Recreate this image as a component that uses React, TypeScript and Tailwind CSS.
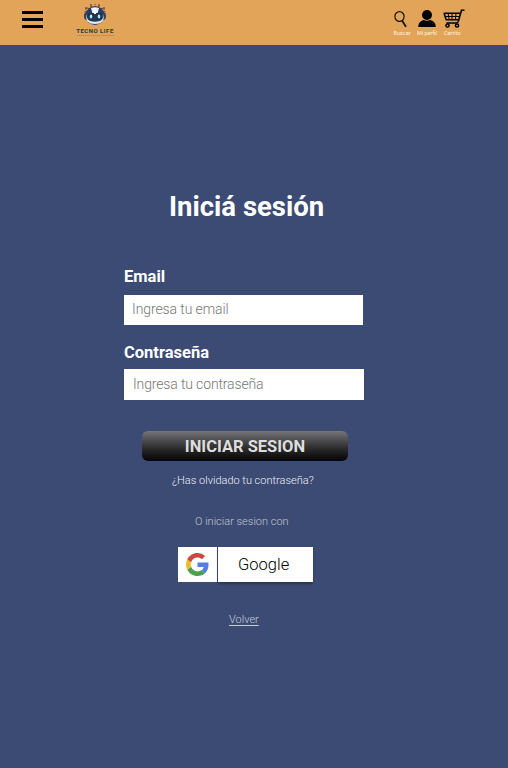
import React from "react";

function Logo() {
  return (
    <svg width="24" height="24" viewBox="0 0 24 24" fill="none">
      <g stroke="#4b4655" strokeWidth="0.9">
        <path d="M6 5.500 4 5 2.500 7M18 5.500h2L21.500 7M9 4 7 2.500M15 4l2-1.500M4 8 1.500 9M20 8l2.500 1" />
      </g>
      <g fill="#914f3c">
        <circle cx="8" cy="2" r="1" /><circle cx="16" cy="2" r="1" />
        <circle cx="3" cy="5" r="1.100" /><circle cx="21" cy="5" r="1.100" />
        <circle cx="12" cy="1.500" r="0.7" />
      </g>
      <rect x="1" y="9" width="22" height="8" rx="3.500" fill="#35425f" />
      <circle cx="12" cy="12.500" r="9.500" fill="#2b3d60" />
      <path d="M8 5Q12 3.500 16 5L14.500 10.500h-5Z" fill="#edf1f5" />
      <path d="M3.500 11Q3.500 16.500 7 18Q12 19.500 17 18Q20.500 16.500 20.500 11Q22.500 21 12 21Q1.500 21 3.500 11Z" fill="#e3e9ef" />
      <path d="M5 11.500Q6 9.500 10 10h4Q18 9.500 19 11.500Q20 17.500 12 17.500Q4 17.500 5 11.500Z" fill="#203451" />
      <path d="M11 5h2v6h-2Z" fill="#ffffff" />
      <ellipse cx="8" cy="13.500" rx="1.300" ry="1.900" fill="#9cf2f0" />
      <ellipse cx="16" cy="13.500" rx="1.300" ry="1.900" fill="#9cf2f0" />
    </svg>
  );
}

function SearchIcon() {
  return (
    <svg width="14" height="17" viewBox="0 0 14 17" fill="none" stroke="#171513">
      <ellipse cx="5.500" cy="5.500" rx="4.600" ry="4.900" strokeWidth="1.200" />
      <path d="m8 9.500 4 6.300" strokeWidth="1.800" />
    </svg>
  );
}

function ProfileIcon() {
  return (
    <svg width="18" height="17" viewBox="0 0 18 17" fill="black">
      <circle cx="9" cy="5" r="5" />
      <path d="M.3 17v-1.300Q.8 11.500 5.500 10Q9 11.500 12.500 10Q17.200 11.500 17.700 15.700V17Z" />
    </svg>
  );
}

function CartIcon() {
  return (
    <svg width="22" height="19" viewBox="0 0 22 19" fill="none" stroke="black">
      <path d="M21.500 1.200h-3L15.300 12.500M.8 4.300h16.500M1 4l2.200 6.800h12.500" strokeWidth="1.600" />
      <path d="m5 4 1.200 6.500M9 4v6.500M13 4l-.5 6.500M2 7.500h15" strokeWidth="1" />
      <path d="M15.300 12.500Q15 14 13 14H3.500" strokeWidth="1.400" />
      <circle cx="4.500" cy="16.500" r="1.600" strokeWidth="1.500" />
      <circle cx="14" cy="16.500" r="1.600" strokeWidth="1.500" />
    </svg>
  );
}

function GoogleIcon() {
  return (
    <svg width="23" height="23" viewBox="0 0 24 24">
      <path fill="#557de6" d="M23.500 12.300c0-.9-.1-1.500-.2-2.300H12v4.500h6.500c-.3 1.500-1.200 2.800-2.500 3.600l3.900 3c2.300-2.100 3.600-5.100 3.600-8.800Z" />
      <path fill="#4e9e52" d="M12 24c3.200 0 5.900-1.100 7.900-2.900l-3.900-3c-1.100.7-2.400 1.100-4 1.100-3.100 0-5.700-2.100-6.700-4.900l-4 3.100C3.300 21.300 7.300 24 12 24Z" />
      <path fill="#edbb2c" d="M5.300 14.300a7.200 7.200 0 0 1 0-4.600l-4-3.100a12 12 0 0 0 0 10.800l4-3.100Z" />
      <path fill="#c9493e" d="M12 4.800c1.800 0 3.300.6 4.600 1.800L20 3.200A11.500 11.500 0 0 0 12 0C7.300 0 3.300 2.700 1.300 6.600l4 3.100c1-2.800 3.600-4.900 6.700-4.900Z" />
    </svg>
  );
}

export default function App() {
  return (
    <div className="flex h-[768px] w-[508px] flex-col overflow-hidden bg-[#3c4b73] font-['Roboto',sans-serif] text-white">
      <header className="flex h-[45px] shrink-0 items-start bg-[#e2a458]">
        <button aria-label="Menú" className="mt-[11px] ml-[22px] flex h-[17px] w-[21px] flex-col justify-between">
          <span className="h-[3px] w-full bg-black" />
          <span className="h-[3px] w-full bg-black" />
          <span className="h-[3px] w-full bg-black" />
        </button>
        <div className="mt-[3px] ml-[32px] flex w-10 flex-col items-center text-[#30333b]">
          <Logo />
          <span className="mt-px text-[6px] leading-[6px] font-bold tracking-[0.5px] whitespace-nowrap">TECNO LIFE</span>
          <span className="mt-px h-px w-[37px] bg-[repeating-linear-gradient(90deg,#b58955_0px,#b58955_1px,#cf9855_1px,#cf9855_2px)]" />
        </div>
        <nav className="ml-[277px] flex text-[5.5px] leading-[6px] text-[#fff1dc]">
          <a className="flex w-5 flex-col items-center"><span className="mt-[11px] flex h-[19px] w-full pl-[2px]"><SearchIcon /></span>Buscar</a>
          <a className="ml-[5px] flex w-5 flex-col items-center whitespace-nowrap"><span className="mt-[10px] flex h-5"><ProfileIcon /></span>Mi perfil</a>
          <a className="ml-[6px] flex w-[22px] flex-col"><span className="mt-[9px] flex h-[21px]"><CartIcon /></span><span className="ml-px">Carrito</span></a>
        </nav>
      </header>
      <main className="flex flex-col">
        <h1 className="mt-[144px] ml-[169px] text-[27.5px] leading-9 font-bold whitespace-nowrap">Iniciá sesión</h1>
        <form className="mt-[42px] ml-[124px] flex w-[240px] flex-col">
          <label htmlFor="email" className="text-[16.5px] leading-5 font-bold">Email</label>
          <input id="email" placeholder="Ingresa tu email" className="mt-[8px] h-[30px] w-[239px] rounded-none bg-white px-2 pb-[2px] text-[14px] font-light tracking-[-0.1px] text-black outline-none placeholder:text-[#777777]" />
          <label htmlFor="password" className="mt-[18px] text-[16.5px] leading-5 font-bold">Contraseña</label>
          <input id="password" type="password" placeholder="Ingresa tu contraseña" className="mt-[6px] h-[31px] w-[240px] rounded-none bg-white px-[9px] pb-[2px] text-[14px] font-light tracking-[-0.14px] text-black outline-none placeholder:text-[#777777]" />
          <button type="button" className="mt-[31px] ml-[18px] h-[30px] w-[206px] rounded-[6px] bg-linear-to-b from-[#77777b] via-[#353537] to-[#050505] pt-[2px] text-[16.5px] font-bold text-[#dedede]">INICIAR SESION</button>
        </form>
        <a className="mt-[12px] ml-[172px] text-[11px] leading-4 font-light whitespace-nowrap text-[#edf0f7]">¿Has olvidado tu contraseña?</a>
        <p className="mt-[25px] ml-[195px] text-[11px] leading-4 font-light whitespace-nowrap text-[#c0c6d5]">O iniciar sesion con</p>
        <button className="mt-[17px] ml-[178px] flex h-[35px] w-[135px] gap-px">
          <span className="flex h-full w-[39px] items-center justify-center bg-white"><GoogleIcon /></span>
          <span className="flex h-full flex-1 items-center bg-white pt-px pl-5 text-[16.5px] font-light text-black shadow-[0_2px_2px_rgba(0,0,0,0.3)]">Google</span>
        </button>
        <a className="mt-[30px] ml-[229px] self-start text-[11px] leading-4 font-light whitespace-nowrap text-[#c7cdda] underline underline-offset-2">Volver</a>
      </main>
    </div>
  );
}
